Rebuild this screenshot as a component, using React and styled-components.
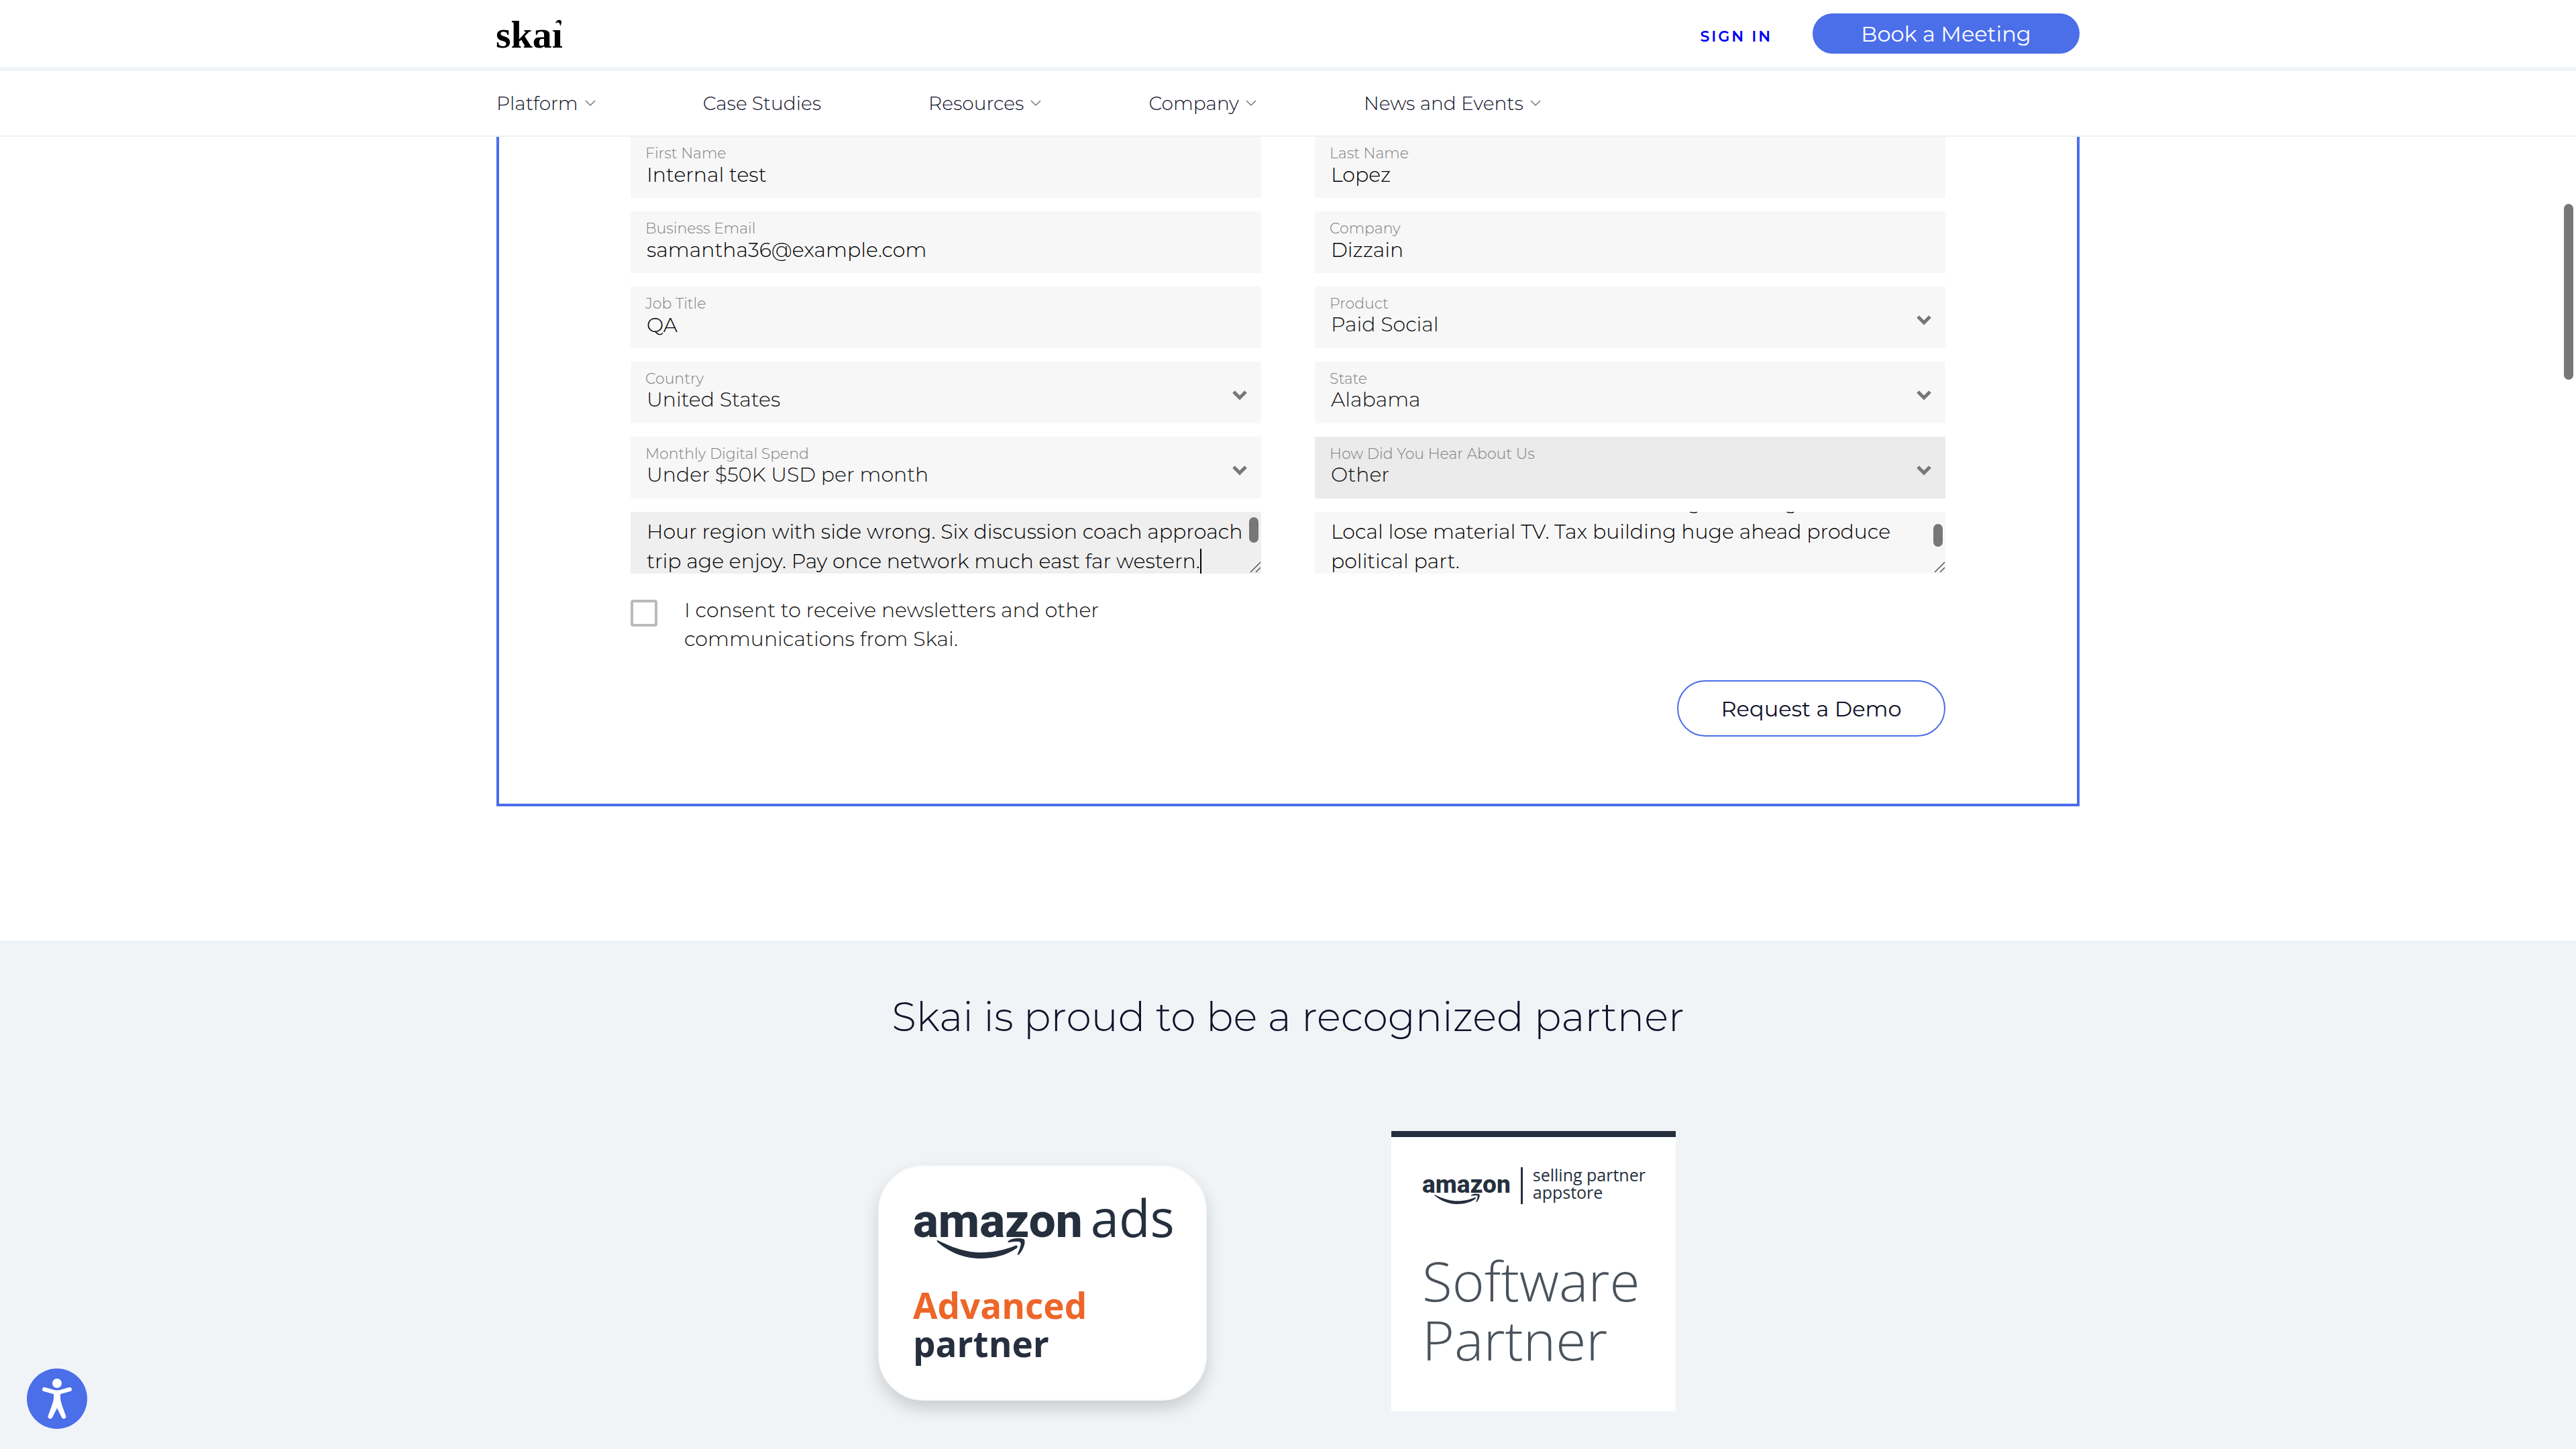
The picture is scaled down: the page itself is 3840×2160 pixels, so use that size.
import React, { useEffect, useRef } from "react";
import styled, { createGlobalStyle } from "styled-components";

const blue = "#4b6ee9";
const ink = "#0f1129";
const squid = "#252f3e";
const mist = "#f0f4f7";

const GlobalStyle = createGlobalStyle`
  *, *::before, *::after { box-sizing: border-box; }
  html { background: #fff; }
  body {
    margin: 0;
    font-family: Montserrat, Inter, sans-serif;
    font-size: 30px;
    font-weight: 300;
    color: #111;
  }
  button, input, select, textarea { font-family: inherit; font-weight: inherit; }
`;

const Page = styled.div`
  display: flex;
  flex-direction: column;
  min-height: 100vh;
  padding-top: 203px;
`;

const Header = styled.header`
  position: fixed;
  top: 0;
  left: 0;
  right: 0;
  z-index: 10;
  background: #fff;
  border-bottom: 2px solid #f2f2f2;
`;

const Container = styled.div`
  width: 100%;
  max-width: 2360px;
  margin: 0 auto;
`;

const TopBar = styled.div`
  border-bottom: 6px solid ${mist};
`;

const TopBarRow = styled(Container)`
  display: flex;
  align-items: center;
  justify-content: space-between;
  height: 100px;
`;

const LogoLink = styled.a`
  display: block;
  height: 44px;
  color: #000;

  svg { overflow: visible; }
`;

const Actions = styled.div`
  display: flex;
  align-items: baseline;
  gap: 60px;
`;

const SignIn = styled.a`
  font-size: 22px;
  font-weight: 600;
  letter-spacing: 3px;
  color: #0000f5;
  text-decoration: none;
`;

const PillButton = styled.button`
  width: ${(p) => (p.$outline ? 400 : 398)}px;
  height: ${(p) => (p.$outline ? 84 : 60)}px;
  padding: 0;
  border: 2px solid ${blue};
  border-radius: 42px;
  background: ${(p) => (p.$outline ? "#fff" : blue)};
  color: ${(p) => (p.$outline ? ink : "#fff")};
  font-size: 32px;
  font-weight: 400;
`;

const NavRow = styled(Container)`
  display: flex;
  align-items: center;
  gap: 160px;
  height: 96px;
`;

const NavItem = styled.a`
  display: flex;
  align-items: center;
  gap: 10px;
  padding: 0;
  border: 0;
  background: none;
  font-size: 28px;
  color: ${ink};
  text-decoration: none;
`;

const Panel = styled.main`
  width: 100%;
  max-width: 2360px;
  margin: 0 auto 200px;
  padding: 0 196px 100px;
  border: 4px solid ${blue};
  border-top: 0;
`;

const Form = styled.form`
  display: flex;
  flex-direction: column;
`;

const Fields = styled.div`
  display: grid;
  grid-template-columns: 1fr 1fr;
  gap: 20px 80px;
`;

const Field = styled.div`
  position: relative;
  display: flex;
  flex-direction: column;
  height: 92px;
  padding: 14px 22px 0;
  background: ${(p) => (p.$active ? "#ebebeb" : "#f7f7f7")};
`;

const Label = styled.label`
  font-size: 22px;
  line-height: 24px;
  color: #808080;
`;

const TextInput = styled.input`
  width: 100%;
  height: 38px;
  padding: 0 2px;
  border: 0;
  outline: 0;
  background: none;
  font-size: 30px;
  color: #000;
`;

const Select = styled.select`
  appearance: none;
  width: 100%;
  height: 34px;
  padding: 0 2px;
  border: 0;
  outline: 0;
  background: none;
  font-size: 30px;
  color: #111;
`;

const SelectArrow = styled.svg`
  position: absolute;
  top: 42px;
  right: 20px;
  pointer-events: none;
`;

const MessageBox = styled.div`
  position: relative;
  height: 92px;
  overflow: hidden;
  background: ${(p) => (p.$active ? "#efefef" : "#f7f7f7")};
`;

const Message = styled.textarea`
  display: block;
  width: 100%;
  height: 92px;
  padding: 8px 24px;
  border: 0;
  outline: 0;
  resize: none;
  overflow: hidden;
  background: none;
  font-size: 30px;
  line-height: 44px;
  white-space: pre;
  color: #000;
`;

const Thumb = styled.span`
  position: absolute;
  top: ${(p) => p.$top}px;
  right: 4px;
  width: 14px;
  height: ${(p) => p.$height}px;
  border-radius: 7px;
  background: #777;
`;

const PageThumb = styled(Thumb)`
  position: fixed;
  z-index: 20;
`;

const Caret = styled.span`
  position: absolute;
  top: 55px;
  left: 849px;
  width: 2px;
  height: 40px;
  background: #000;
`;

const Grip = styled.svg`
  position: absolute;
  right: 0;
  bottom: 0;
`;

const Consent = styled.label`
  display: flex;
  align-items: flex-start;
  gap: 40px;
  margin-top: 33px;
  line-height: 43px;
`;

const ConsentText = styled.span`
  max-width: 700px;
`;

const Checkbox = styled.input`
  appearance: none;
  flex: none;
  width: 40px;
  height: 40px;
  margin: 6px 0 0;
  border: 4px solid #bbb;
  border-radius: 4px;
  background: #fff;
`;

const Submit = styled(PillButton)`
  align-self: flex-end;
  margin-top: 40px;
`;

const Partners = styled.section`
  flex: 1;
  display: flex;
  flex-direction: column;
  align-items: center;
  padding: 78px 0 56px;
  background: ${mist};
`;

const Heading = styled.h2`
  margin: 0 0 134px;
  font-size: 60px;
  font-weight: 300;
  line-height: 72px;
  color: ${ink};
`;

const PartnerGrid = styled.div`
  display: grid;
  grid-template-columns: 732px 732px;
  justify-items: center;
  align-items: end;
`;

const AdsCard = styled.article`
  width: 490px;
  height: 351px;
  margin-bottom: 16px;
  padding: 38px 0 0 50px;
  border: 2px solid #f8f9fa;
  border-radius: 68px;
  background: #fff;
  box-shadow: 0 12px 24px rgba(0, 0, 0, 0.16);
  font-family: "Open Sans", sans-serif;
`;

const AdsLogo = styled.div`
  display: flex;
  align-items: baseline;
  gap: 12px;
  height: 80px;
  margin-bottom: 60px;
  color: ${squid};
`;

const AdsWord = styled.span`
  font-size: 76px;
  font-weight: 400;
  line-height: 76px;
`;

const Wordmark = styled.span`
  position: relative;
  font-family: Roboto, sans-serif;
  font-weight: 800;
  font-size: ${(p) => (p.$small ? 37 : 71)}px;
  line-height: ${(p) => (p.$small ? 36 : 76)}px;
  color: ${squid};
`;

const Smile = styled.svg`
  position: absolute;
  left: ${(p) => (p.$small ? 18 : 35)}px;
  bottom: ${(p) => (p.$small ? -12 : -20)}px;
  width: ${(p) => (p.$small ? 69 : 134)}px;
`;

const Tier = styled.p`
  margin: 0;
  font-size: 53px;
  font-weight: 700;
  line-height: 57px;
  color: ${(p) => (p.$accent ? "#ed6629" : squid)};
`;

const StoreCard = styled.article`
  width: 424px;
  height: 418px;
  padding: 43px 0 0 46px;
  border-top: 9px solid ${squid};
  background: #fff;
  font-family: "Open Sans", sans-serif;
`;

const StoreLogo = styled.div`
  display: flex;
  align-items: flex-start;
  gap: 15px;
  margin-bottom: 69px;
`;

const StoreMark = styled.div`
  display: flex;
  padding-top: 10px;
`;

const Divider = styled.span`
  width: 3px;
  height: 55px;
  margin-top: 2px;
  background: ${squid};
`;

const StoreText = styled.span`
  font-size: 25px;
  font-weight: 400;
  line-height: 26px;
  color: ${squid};
`;

const StoreTitle = styled.p`
  margin: 0;
  font-size: 82px;
  font-weight: 300;
  line-height: 88px;
  color: #4a525b;
`;

const AccessButton = styled.button`
  position: fixed;
  left: 40px;
  bottom: 30px;
  width: 90px;
  height: 90px;
  padding: 0;
  border: 0;
  border-radius: 45px;
  background: ${blue};
`;

const nav = [
  { label: "Platform", menu: true },
  { label: "Case Studies" },
  { label: "Resources", menu: true },
  { label: "Company", menu: true },
  { label: "News and Events", menu: true },
];

const fields = [
  { id: "first", label: "First Name", value: "Internal test" },
  { id: "last", label: "Last Name", value: "Lopez" },
  { id: "email", label: "Business Email", value: "samantha36@example.com", type: "email" },
  { id: "company", label: "Company", value: "Dizzain" },
  { id: "job", label: "Job Title", value: "QA" },
  { id: "product", label: "Product", value: "Paid Social", select: true },
  { id: "country", label: "Country", value: "United States", select: true },
  { id: "state", label: "State", value: "Alabama", select: true },
  { id: "spend", label: "Monthly Digital Spend", value: "Under $50K USD per month", select: true },
  { id: "source", label: "How Did You Hear About Us", value: "Other", select: true, active: true },
];

const messageText =
  "Hour region with side wrong. Six discussion coach approach\ntrip age enjoy. Pay once network much east far western.";

const notesText =
  "Street houses nature million or being as strong\nLocal lose material TV. Tax building huge ahead produce\npolitical part.";

function SkaiLogo() {
  return (
    <svg width="100" height="44" viewBox="0 0 100 44" aria-hidden="true">
      <text x="-1" y="43" fontFamily="'Liberation Serif', serif" fontWeight="700" fontSize="58">
        skaı
      </text>
      <path d="M88 7 C89 1 97 0 97 5 C97 7 96 9 95 11 C95 6 92 4 88 7Z" />
    </svg>
  );
}

function AmazonWordmark({ small }) {
  return (
    <Wordmark $small={small}>
      amazon
      <Smile $small={small} viewBox="0 0 134 33" fill="currentColor" aria-hidden="true">
        <path d="M2 4 C30 18 50 22 66 22 C85 22 103 18 117 12 C121 10 122 14 119 16 C105 26 85 31 66 31 C40 31 18 21 1 6 Q0 3 2 4Z" />
        <path d="M107 5 C113 0 124 0 130 2 C134 5 130 18 123 25 C121 27 121 25 121 24 C124 17 127 9 125 7 C123 5 115 6 108 7 C106 7 106 6 107 5Z" />
      </Smile>
    </Wordmark>
  );
}

function ResizeGrip() {
  return (
    <Grip width="18" height="18" fill="none" stroke="#555" strokeWidth="1.5" aria-hidden="true">
      <path d="M2 16 L17 1 M10 16 L17 9" />
    </Grip>
  );
}

function FormField({ id, label, value, type, select, active }) {
  return (
    <Field $active={active}>
      <Label htmlFor={id}>{label}</Label>
      {select ? (
        <>
          <Select id={id} defaultValue={value}>
            <option>{value}</option>
          </Select>
          <SelectArrow width="24" height="16" fill="none" stroke="#777" strokeWidth="5" aria-hidden="true">
            <path d="M3 3 L12 12 L21 3" />
          </SelectArrow>
        </>
      ) : (
        <TextInput id={id} type={type || "text"} defaultValue={value} />
      )}
    </Field>
  );
}

export default function App() {
  const notes = useRef(null);

  useEffect(() => {
    notes.current.scrollTop = 44;
  }, []);

  return (
    <Page>
      <GlobalStyle />
      <Header>
        <TopBar>
          <TopBarRow>
            <LogoLink href="#" aria-label="Skai">
              <SkaiLogo />
            </LogoLink>
            <Actions>
              <SignIn href="#">SIGN IN</SignIn>
              <PillButton type="button">Book a Meeting</PillButton>
            </Actions>
          </TopBarRow>
        </TopBar>
        <NavRow as="nav">
          {nav.map(({ label, menu }) => (
            <NavItem key={label} as={menu ? "button" : "a"} href={menu ? undefined : "#"}>
              {label}
              {menu && (
                <svg width="16" height="10" fill="none" stroke="#777" strokeWidth="1.5" aria-hidden="true">
                  <path d="M1 1 L8 8 L15 1" />
                </svg>
              )}
            </NavItem>
          ))}
        </NavRow>
      </Header>

      <Panel>
        <Form>
          <Fields>
            {fields.map((f) => (
              <FormField key={f.id} {...f} />
            ))}
            <MessageBox $active>
              <Message aria-label="Message" defaultValue={messageText} />
              <Caret />
              <Thumb $top={8} $height={38} />
              <ResizeGrip />
            </MessageBox>
            <MessageBox>
              <Message ref={notes} aria-label="Additional notes" defaultValue={notesText} />
              <Thumb $top={18} $height={34} />
              <ResizeGrip />
            </MessageBox>
          </Fields>
          <Consent>
            <Checkbox type="checkbox" />
            <ConsentText>I consent to receive newsletters and other communications from Skai.</ConsentText>
          </Consent>
          <Submit type="submit" $outline>
            Request a Demo
          </Submit>
        </Form>
      </Panel>

      <Partners>
        <Heading>Skai is proud to be a recognized partner</Heading>
        <PartnerGrid>
          <AdsCard>
            <AdsLogo>
              <AmazonWordmark />
              <AdsWord>ads</AdsWord>
            </AdsLogo>
            <Tier $accent>Advanced</Tier>
            <Tier>partner</Tier>
          </AdsCard>
          <StoreCard>
            <StoreLogo>
              <StoreMark>
                <AmazonWordmark small />
              </StoreMark>
              <Divider />
              <StoreText>
                selling partner
                <br />
                appstore
              </StoreText>
            </StoreLogo>
            <StoreTitle>Software</StoreTitle>
            <StoreTitle>Partner</StoreTitle>
          </StoreCard>
        </PartnerGrid>
      </Partners>

      <AccessButton type="button" aria-label="Accessibility options">
        <svg width="90" height="90" viewBox="0 0 90 90" aria-hidden="true">
          <circle cx="45" cy="22" r="7" fill="#fff" />
          <path d="M26 31 L40 35 Q45 36 50 35 L64 31" fill="none" stroke="#fff" strokeWidth="6" strokeLinecap="round" />
          <path d="M40 34 H50 V42 C50 49 52 53 58 70 A3 3 0 0 1 52 73 L45 59 L38 73 A3 3 0 0 1 32 70 C38 53 40 49 40 42Z" fill="#fff" />
        </svg>
      </AccessButton>
      <PageThumb $top={304} $height={262} />
    </Page>
  );
}
